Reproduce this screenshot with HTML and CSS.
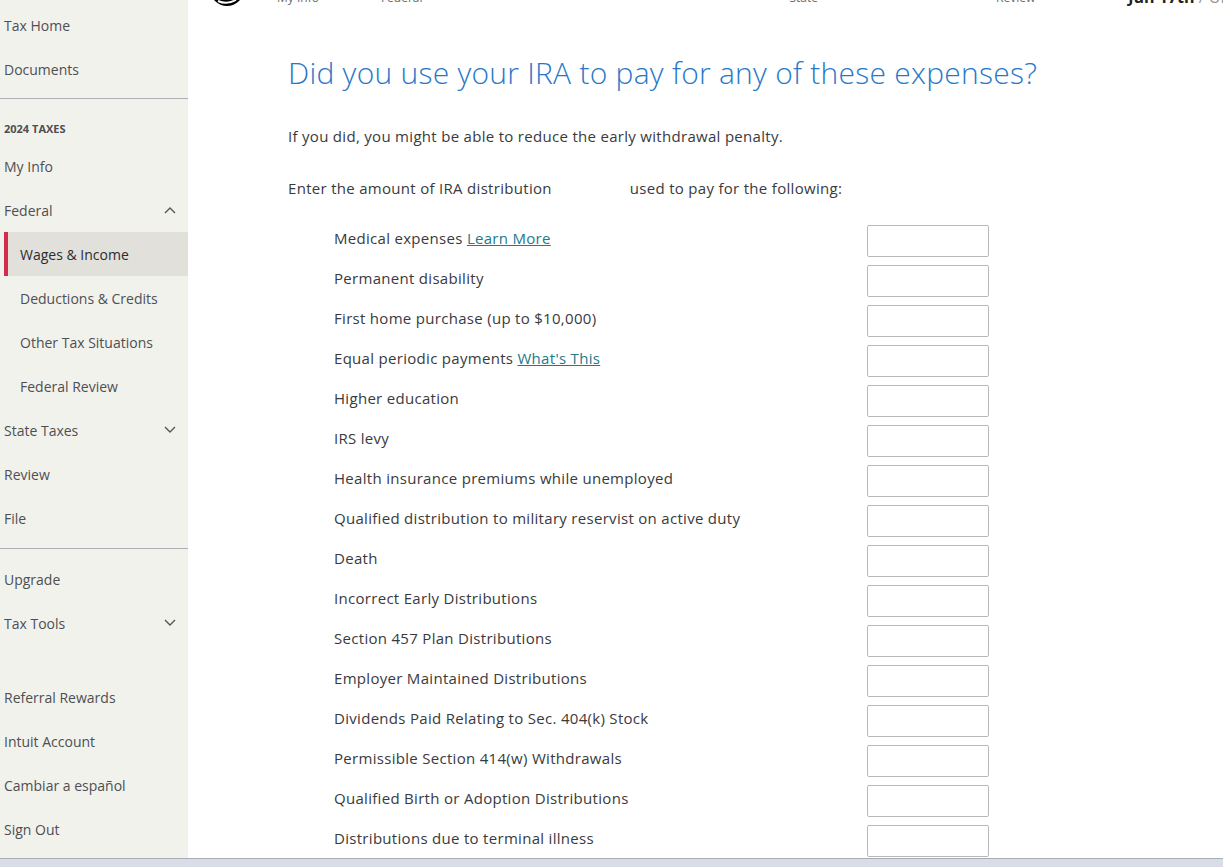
FILE: index.html
```html
<!DOCTYPE html>
<html lang="en">
<head>
    <meta charset="UTF-8">
    <title>Wages &amp; Income - IRA Expenses</title>
    <link rel="stylesheet" href="styles.css">
</head>
<body>
    <div class="screen">
        <nav class="sidebar">
            <a class="nav-item">Tax Home</a>
            <a class="nav-item">Documents</a>
            <hr class="divider">
            <div class="section-title">2024 TAXES</div>
            <a class="nav-item">My Info</a>
            <a class="nav-item">Federal
                <svg class="chev" viewBox="0 0 12 8"><path d="M1 7 L6 2 L11 7"/></svg>
            </a>
            <a class="nav-item sub active">Wages &amp; Income</a>
            <a class="nav-item sub">Deductions &amp; Credits</a>
            <a class="nav-item sub">Other Tax Situations</a>
            <a class="nav-item sub">Federal Review</a>
            <a class="nav-item">State Taxes
                <svg class="chev" viewBox="0 0 12 8"><path d="M1 1 L6 6 L11 1"/></svg>
            </a>
            <a class="nav-item">Review</a>
            <a class="nav-item">File</a>
            <hr class="divider lower">
            <a class="nav-item">Upgrade</a>
            <a class="nav-item">Tax Tools
                <svg class="chev" viewBox="0 0 12 8"><path d="M1 1 L6 6 L11 1"/></svg>
            </a>
            <div class="spacer"></div>
            <a class="nav-item">Referral Rewards</a>
            <a class="nav-item">Intuit Account</a>
            <a class="nav-item">Cambiar a español</a>
            <a class="nav-item">Sign Out</a>
        </nav>

        <main class="main">
            <div class="topbar">
                <div class="steps">
                    <svg class="logo" viewBox="0 0 34 34"><circle cx="17" cy="17" r="17" fill="#000"/><path d="M8 29 Q17 33 26 28" stroke="#fff" stroke-width="2" fill="none"/></svg>
                    <span class="step s-info">My Info</span>
                    <span class="step s-fed">Federal</span>
                    <span class="step s-state">State</span>
                    <span class="step s-review">Review</span>
                    <span class="due"><b>Jun 17th</b> / Un</span>
                </div>
            </div>

            <div class="content">
                <h1>Did you use your IRA to pay for any of these expenses?</h1>
                <p class="intro">If you did, you might be able to reduce the early withdrawal penalty.</p>
                <p class="intro prompt">Enter the amount of IRA distribution<span class="masked"></span>used to pay for the following:</p>

                <div class="rows">
                    <div class="row"><label>Medical expenses <a href="#">Learn More</a></label><input type="text"></div>
                    <div class="row"><label>Permanent disability</label><input type="text"></div>
                    <div class="row"><label>First home purchase (up to $10,000)</label><input type="text"></div>
                    <div class="row"><label>Equal periodic payments <a href="#">What's This</a></label><input type="text"></div>
                    <div class="row"><label>Higher education</label><input type="text"></div>
                    <div class="row"><label>IRS levy</label><input type="text"></div>
                    <div class="row"><label>Health insurance premiums while unemployed</label><input type="text"></div>
                    <div class="row"><label>Qualified distribution to military reservist on active duty</label><input type="text"></div>
                    <div class="row"><label>Death</label><input type="text"></div>
                    <div class="row"><label>Incorrect Early Distributions</label><input type="text"></div>
                    <div class="row"><label>Section 457 Plan Distributions</label><input type="text"></div>
                    <div class="row"><label>Employer Maintained Distributions</label><input type="text"></div>
                    <div class="row"><label>Dividends Paid Relating to Sec. 404(k) Stock</label><input type="text"></div>
                    <div class="row"><label>Permissible Section 414(w) Withdrawals</label><input type="text"></div>
                    <div class="row"><label>Qualified Birth or Adoption Distributions</label><input type="text"></div>
                    <div class="row"><label>Distributions due to terminal illness</label><input type="text"></div>
                </div>
            </div>
        </main>
    </div>
    <div class="bottom-strip"></div>
</body>
</html>
```

FILE: styles.css
```css
html, body {
    margin: 0;
    padding: 0;
    height: 867px;
    overflow: hidden;
}
body {
    font-family: "Open Sans", "Noto Sans", Arial, sans-serif;
    color: #393a3d;
    background: #fff;
    display: flex;
    flex-direction: column;
}
.screen {
    display: flex;
    height: 858px;
    overflow: hidden;
}
.sidebar {
    width: 188px;
    flex-shrink: 0;
    background-color: #f2f2ed;
    display: flex;
    flex-direction: column;
    padding-top: 3px;
}
.nav-item {
    display: flex;
    align-items: center;
    justify-content: space-between;
    height: 44px;
    padding: 0 12px 0 4px;
    font-size: 14px;
    color: #4e4f52;
    cursor: pointer;
}
.nav-item.sub {
    padding-left: 20px;
}
.nav-item.active {
    margin-left: 4px;
    padding-left: 12px;
    border-left: 4px solid #d52b4d;
    background-color: #e1e0da;
    color: #2b2c2f;
}
.chev {
    width: 12px;
    height: 8px;
    fill: none;
    stroke: #555;
    stroke-width: 1.4;
}
.divider {
    border: none;
    border-top: 1px solid #aab0b5;
    margin: 7px 0 22px;
}
.divider.lower {
    margin: 8px 0 8px;
}
.section-title {
    font-size: 11px;
    font-weight: bold;
    color: #4e4f52;
    padding: 0 4px;
    height: 16px;
    line-height: 16px;
    margin-bottom: 7px;
}
.spacer {
    height: 30px;
}
.main {
    flex: 1;
    overflow: hidden;
}
.topbar {
    height: 8px;
    overflow: hidden;
}
.steps {
    display: flex;
    align-items: flex-end;
    margin-top: -14px;
    height: 20px;
    font-size: 12px;
    color: #6b6c72;
}
.logo {
    width: 34px;
    height: 34px;
    flex-shrink: 0;
    margin-left: 22px;
    align-self: flex-start;
    margin-top: -14px;
}
.step {
    line-height: 16px;
    white-space: nowrap;
}
.s-info { margin-left: 33px; }
.s-fed { margin-left: 62px; }
.s-state { margin-left: 367px; }
.s-review { margin-left: 178px; }
.due {
    margin-left: 93px;
    font-size: 16px;
    line-height: 18px;
    color: #999;
    white-space: nowrap;
}
.due b {
    color: #222;
}
.content {
    padding: 43px 0 0 100px;
}
h1 {
    margin: 0;
    font-weight: 300;
    font-size: 30px;
    letter-spacing: 0.25px;
    line-height: 44px;
    color: #2978c8;
}
.intro {
    margin: 31px 0 0;
    font-size: 15px;
    letter-spacing: 0.3px;
    line-height: 20px;
    color: #393a3d;
}
.prompt {
    margin-top: 32px;
}
.masked {
    display: inline-block;
    width: 78px;
}
.rows {
    margin-top: 23px;
    padding-left: 46px;
    width: 655px;
}
.row {
    display: flex;
    align-items: center;
    justify-content: space-between;
    height: 40px;
}
.row label {
    font-size: 15px;
    letter-spacing: 0.3px;
    color: #393a3d;
    margin-bottom: 6px;
}
.row a {
    color: #217a8b;
    text-decoration: underline;
}
.row input {
    width: 122px;
    height: 32px;
    box-sizing: border-box;
    border: 1px solid #b8b9bc;
    border-radius: 2px;
    background: #fff;
}
.bottom-strip {
    height: 9px;
    border-top: 1px solid #a9aeb6;
    background-color: #d9dde8;
    box-sizing: border-box;
}
```
